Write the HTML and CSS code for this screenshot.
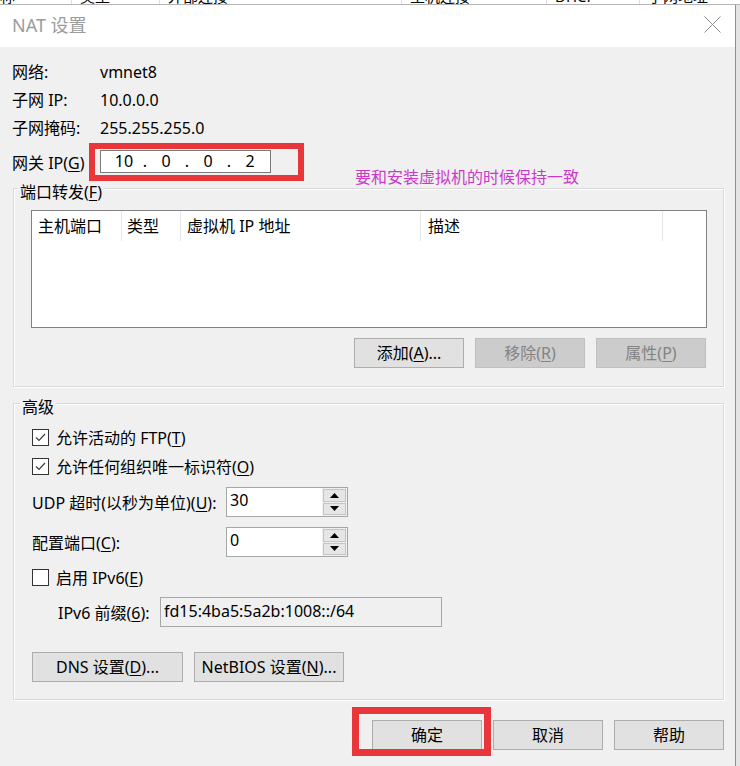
FILE: index.html
```html
<!DOCTYPE html>
<html lang="zh-CN">
<head>
<meta charset="utf-8">
<title>NAT 设置</title>
<link rel="stylesheet" href="styles.css">
</head>
<body>
<div class="bg-header">
  <div class="bg-row">
    <span class="bg-col c1">称</span>
    <span class="bg-col c2">类型</span>
    <span class="bg-col c3">外部连接</span>
    <span class="bg-col c4">主机连接</span>
    <span class="bg-col c5">DHCP</span>
    <span class="bg-col c6">子网地址</span>
  </div>
</div>
<div class="screen">
  <div class="dialog">
    <div class="titlebar">
      <span class="title">NAT 设置</span>
      <svg class="close" viewBox="0 0 17 17" width="17" height="17"><path d="M0.5 0.5L16.5 16.5M16.5 0.5L0.5 16.5" stroke="#8a8a8a" stroke-width="1" fill="none"/></svg>
    </div>
    <div class="content">
      <div class="info">
        <div class="info-row"><span class="info-label">网络:</span><span>vmnet8</span></div>
        <div class="info-row"><span class="info-label">子网 IP:</span><span>10.0.0.0</span></div>
        <div class="info-row"><span class="info-label">子网掩码:</span><span>255.255.255.0</span></div>
      </div>
      <div class="gw-row">
        <span class="info-label">网关 IP(<u>G</u>)</span>
        <div class="ip-input">
          <span class="oct">10</span><span class="dot">.</span><span class="oct">0</span><span class="dot">.</span><span class="oct">0</span><span class="dot">.</span><span class="oct">2</span>
        </div>
      </div>

      <div class="group group-ports">
        <div class="group-title gt-ports">端口转发(<u>F</u>)</div>
        <div class="list">
          <div class="list-head">
            <span class="lh lh1">主机端口</span>
            <span class="lh lh2">类型</span>
            <span class="lh lh3">虚拟机 IP 地址</span>
            <span class="lh lh4">描述</span>
          </div>
        </div>
        <div class="btn-row list-btns">
          <span class="btn">添加(<u>A</u>)...</span>
          <span class="btn disabled">移除(<u>R</u>)</span>
          <span class="btn disabled">属性(<u>P</u>)</span>
        </div>
      </div>

      <div class="group group-adv">
        <div class="group-title gt-adv">高级</div>
        <div class="check-row r-ftp">
          <span class="checkbox"><svg viewBox="0 0 15 15" width="15" height="15"><polyline points="3,7.5 6,10.5 12,4" fill="none" stroke="#3c3c3c" stroke-width="1.2"/></svg></span>
          <span>允许活动的 FTP(<u>T</u>)</span>
        </div>
        <div class="check-row r-org">
          <span class="checkbox"><svg viewBox="0 0 15 15" width="15" height="15"><polyline points="3,7.5 6,10.5 12,4" fill="none" stroke="#3c3c3c" stroke-width="1.2"/></svg></span>
          <span>允许任何组织唯一标识符(<u>O</u>)</span>
        </div>
        <div class="field-row r-udp">
          <span class="field-label">UDP 超时(以秒为单位)(<u>U</u>):</span>
          <div class="spin">
            <span class="spin-text">30</span>
            <span class="spin-btns">
              <span class="spin-btn"><svg viewBox="0 0 9 5" width="9" height="5"><polygon points="0,5 4.5,0 9,5" fill="#000"/></svg></span>
              <span class="spin-btn"><svg viewBox="0 0 9 5" width="9" height="5"><polygon points="0,0 9,0 4.5,5" fill="#000"/></svg></span>
            </span>
          </div>
        </div>
        <div class="field-row r-port">
          <span class="field-label">配置端口(<u>C</u>):</span>
          <div class="spin">
            <span class="spin-text">0</span>
            <span class="spin-btns">
              <span class="spin-btn"><svg viewBox="0 0 9 5" width="9" height="5"><polygon points="0,5 4.5,0 9,5" fill="#000"/></svg></span>
              <span class="spin-btn"><svg viewBox="0 0 9 5" width="9" height="5"><polygon points="0,0 9,0 4.5,5" fill="#000"/></svg></span>
            </span>
          </div>
        </div>
        <div class="check-row r-ipv6">
          <span class="checkbox"></span>
          <span>启用 IPv6(<u>E</u>)</span>
        </div>
        <div class="field-row r-prefix">
          <span class="prefix-label">IPv6 前缀(<u>6</u>):</span>
          <span class="prefix-input">fd15:4ba5:5a2b:1008::/64</span>
        </div>
        <div class="btn-row dns-btns">
          <span class="btn btn-dns">DNS 设置(<u>D</u>)...</span>
          <span class="btn btn-netbios">NetBIOS 设置(<u>N</u>)...</span>
        </div>
      </div>

      <div class="btn-row footer">
        <span class="btn">确定</span>
        <span class="btn">取消</span>
        <span class="btn">帮助</span>
      </div>
    </div>

    <div class="annotation">要和安装虚拟机的时候保持一致</div>
    <div class="mark mark-gw"></div>
    <div class="mark mark-ok"></div>
  </div>
  <div class="side"></div>
</div>
</body>
</html>
```

FILE: styles.css
```css
* { box-sizing: border-box; }
html, body { margin: 0; padding: 0; }
body {
  width: 740px;
  height: 766px;
  overflow: hidden;
  background: #fff;
  font-family: "Noto Sans", "Noto Sans CJK SC", sans-serif;
  font-size: 16px;
  color: #000;
}
u { text-decoration: underline; text-underline-offset: 2px; }

/* background window strip */
.bg-header {
  height: 5px;
  overflow: hidden;
  background: #fff;
  border-bottom: 1px solid #b5b5b5;
}
.bg-row {
  display: flex;
  margin-top: -12px;
  font-size: 15px;
  line-height: 16px;
}
.bg-col {
  height: 16px;
  white-space: nowrap;
  border-right: 1px solid #dedede;
  padding-left: 8px;
}
.c1 { width: 72px; padding-left: 0; }
.c2 { width: 88px; }
.c3 { width: 242px; }
.c4 { width: 145px; }
.c5 { width: 93px; }
.c6 { flex: 1; border-right: none; }

.screen { display: flex; height: 761px; }
.side { flex: 1; background: #e4e4e4; }

.dialog {
  position: relative;
  width: 736px;
  height: 761px;
  flex: none;
  background: #f0f0f0;
  border-right: 1px solid #8f8f8f;
  overflow: hidden;
}

.titlebar {
  height: 42px;
  background: #fff;
  display: flex;
  align-items: center;
  justify-content: space-between;
  padding: 0 14px 0 12px;
}
.title {
  font-size: 18px;
  line-height: 24px;
  color: #9c9c9c;
  margin-bottom: 2px;
}
.close { display: block; margin-bottom: 3px; }

.content { padding: 11px 12px 0 12px; }

.info-row { display: flex; height: 28px; line-height: 28px; }
.info-label { width: 88px; flex: none; }

.gw-row {
  display: flex;
  align-items: center;
  height: 23px;
  margin-top: 8px;
}
.ip-input {
  width: 171px;
  height: 23px;
  background: #fff;
  border: 1px solid #7a7a7a;
  display: flex;
  padding-left: 6px;
  line-height: 21px;
}
.oct { width: 34px; text-align: center; }
.dot { width: 8px; text-align: center; }

/* group boxes */
.group {
  width: 711px;
  margin-left: 1px;
  border: 1px solid #d9d9d9;
  box-shadow: inset 1px 1px 0 #fff, 1px 1px 0 #fff;
}
.group-title {
  width: max-content;
  height: 20px;
  line-height: 20px;
  margin-top: -7px;
  padding: 0 2px;
  background: #f0f0f0;
}
.group-ports { margin-top: 15px; padding: 0 16px 18px 17px; }
.gt-ports { margin-left: -13px; }
.group-adv { margin-top: 16px; padding: 0 16px 17px 18px; }
.gt-adv { margin-left: -12px; }

/* list view */
.list {
  margin-top: 8px;
  height: 118px;
  background: #fff;
  border: 1px solid #828282;
}
.list-head { display: flex; height: 30px; line-height: 30px; }
.lh { border-right: 1px solid #e5e5e5; white-space: nowrap; }
.lh1 { width: 90px; padding-left: 6px; }
.lh2 { width: 59px; padding-left: 5px; }
.lh3 { width: 240px; padding-left: 6px; }
.lh4 { width: 242px; padding-left: 7px; }

/* buttons */
.btn-row { display: flex; gap: 11px; }
.btn {
  display: block;
  width: 110px;
  height: 30px;
  line-height: 28px;
  text-align: center;
  background: #e1e1e1;
  border: 1px solid #adadad;
  white-space: nowrap;
}
.btn.disabled {
  background: #cccccc;
  border-color: #bfbfbf;
  color: #838383;
}
.list-btns { margin-top: 10px; justify-content: flex-end; margin-right: 1px; }

/* advanced */
.check-row {
  display: flex;
  align-items: center;
  height: 22px;
  gap: 7px;
}
.r-ftp { margin-top: 9px; }
.r-org { margin-top: 7px; }
.r-ipv6 { margin-top: 9px; }
.checkbox {
  width: 17px;
  height: 17px;
  flex: none;
  border: 1px solid #333;
  background: #fff;
  display: flex;
  align-items: center;
  justify-content: center;
}
.checkbox svg { display: block; }

.field-row { display: flex; align-items: center; height: 30px; }
.r-udp { margin-top: 10px; }
.r-port { margin-top: 10px; }
.r-prefix { margin-top: 9px; padding-left: 26px; }
.field-label { width: 194px; flex: none; white-space: nowrap; }

.spin {
  display: flex;
  width: 122px;
  height: 30px;
  border: 1px solid #a6a6a6;
  background: #fff;
}
.spin-text {
  flex: 1;
  padding-left: 3px;
  line-height: 24px;
}
.spin-btns {
  width: 25px;
  display: flex;
  flex-direction: column;
  gap: 1px;
  padding: 1px;
  background: #f0f0f0;
}
.spin-btn {
  flex: 1;
  background: #e6e6e6;
  border: 1px solid #c4c4c4;
  display: flex;
  align-items: center;
  justify-content: center;
}
.spin-btn svg { display: block; }

.prefix-label { width: 102px; flex: none; white-space: nowrap; }
.prefix-input {
  width: 282px;
  height: 30px;
  line-height: 26px;
  padding-left: 3px;
  background: #f0f0f0;
  border: 1px solid #a8a8a8;
}

.dns-btns { margin-top: 25px; }
.btn-dns { width: 151px; }
.btn-netbios { width: 150px; }

.footer { margin-top: 20px; justify-content: flex-end; margin-right: -1px; }

/* overlays: annotation pasted onto the screenshot */
.annotation {
  position: absolute;
  left: 355px;
  top: 162px;
  font-size: 16px;
  line-height: 20px;
  color: #cc38cc;
  white-space: nowrap;
}
.mark {
  position: absolute;
  border: 6px solid #e8363b;
}
.mark-gw { left: 89px; top: 138px; width: 215px; height: 38px; }
.mark-ok { left: 352px; top: 702px; width: 139px; height: 49px; border-width: 7px; }
```
